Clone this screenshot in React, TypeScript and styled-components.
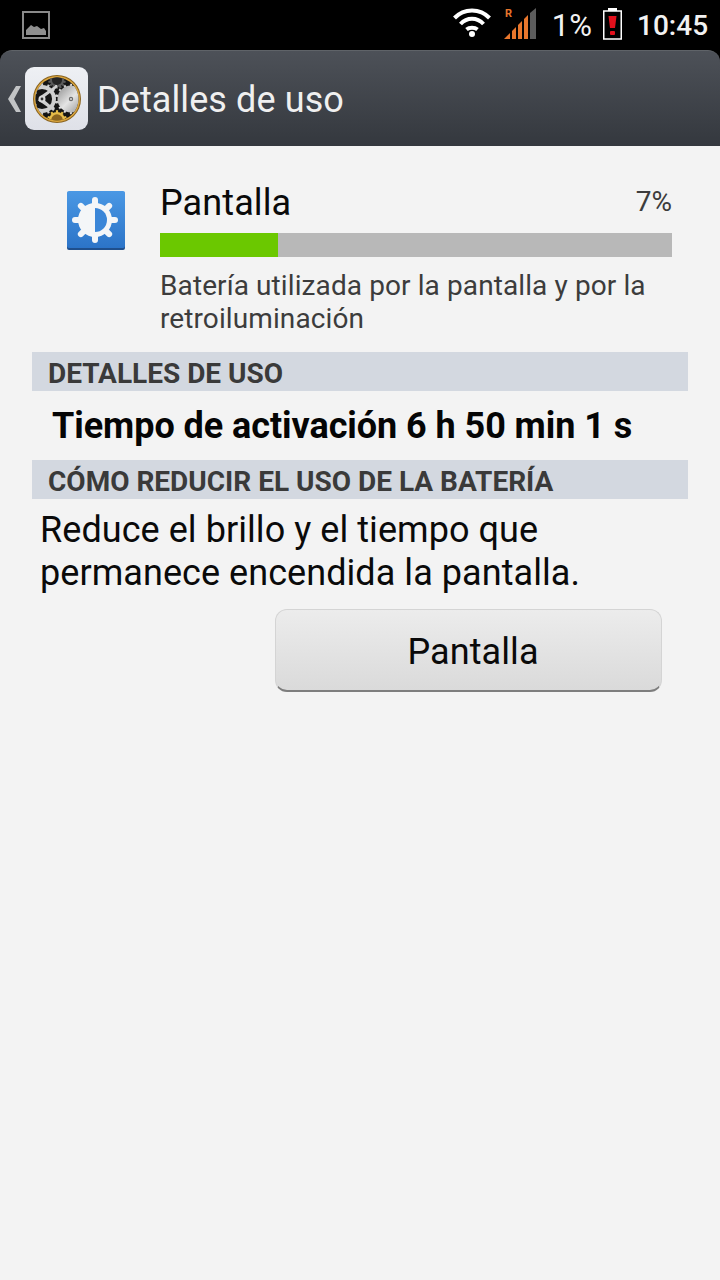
import React from "react";
import styled, { createGlobalStyle } from "styled-components";

const Global = createGlobalStyle`
  html, body { margin: 0; padding: 0; background: #f3f3f3; }
  body { font-family: Roboto, "Liberation Sans", sans-serif; }
`;

const Screen = styled.div`
  width: 720px;
  height: 1280px;
  background: #f3f3f3;
  overflow: hidden;
  display: flex;
  flex-direction: column;
`;

const StatusBar = styled.div`
  height: 50px;
  background: #000;
  display: flex;
  align-items: center;
  padding: 0 12px 0 22px;
  color: #f2f2f2;
`;

const StatusRight = styled.div`
  margin-left: auto;
  display: flex;
  align-items: center;
`;

const Percent = styled.span`
  font-size: 31px;
  margin-left: 16px;
`;

const Clock = styled.span`
  font-size: 28px;
  font-weight: 500;
  margin-left: 15px;
  width: 71px;
`;

const ActionFrame = styled.div`
  background: #000;
`;

const ActionBar = styled.div`
  height: 96px;
  background: linear-gradient(#4d5158, #34383e);
  border-radius: 12px 12px 0 0;
  display: flex;
  align-items: center;
  padding-left: 7px;
  box-sizing: border-box;
  border-top: 1px solid #5f6368;
`;

const AppBadge = styled.div`
  width: 63px;
  height: 63px;
  border-radius: 9px;
  background: linear-gradient(#eef0f4, #dfe1e8);
  margin-left: 2px;
  display: flex;
  align-items: center;
  justify-content: center;
`;

const ActionTitle = styled.h1`
  margin: 2px 0 0 9px;
  font-size: 36px;
  font-weight: 400;
  color: #f0f0f0;
  letter-spacing: 0.1px;
`;

const Content = styled.div`
  display: flex;
  flex-direction: column;
  padding: 0 32px;
`;

const UsageRow = styled.div`
  display: flex;
  padding-top: 34px;
`;

const IconSlot = styled.div`
  width: 128px;
  padding: 11px 0 0 35px;
  box-sizing: border-box;
  flex-shrink: 0;
`;

const UsageBody = styled.div`
  flex: 1;
  padding-right: 16px;
`;

const NameRow = styled.div`
  display: flex;
  align-items: flex-start;
  justify-content: space-between;
  height: 53px;
`;

const Name = styled.span`
  font-size: 36px;
  color: #0a0a0a;
  line-height: 46px;
  letter-spacing: 0.1px;
`;

const Pct = styled.span`
  font-size: 28px;
  color: #3c3c3c;
  line-height: 44px;
`;

const Bar = styled.div`
  height: 24px;
  background: #b8b8b8;
`;

const BarFill = styled.div`
  height: 100%;
  background: #6bc800;
`;

const UsageDesc = styled.p`
  margin: 12px 0 0;
  font-size: 28px;
  line-height: 33px;
  color: #3c3c3c;
  letter-spacing: 0.1px;
`;

const SectionHeader = styled.div<{ $top: number }>`
  margin-top: ${(p) => p.$top}px;
  height: 39px;
  background: #d3d8e0;
  padding-left: 16px;
  font-size: 28px;
  font-weight: 700;
  line-height: 43px;
  color: #3a3a3a;
`;

const ActiveTime = styled.div`
  font-size: 36px;
  font-weight: 700;
  color: #050505;
  padding-left: 20px;
  height: 69px;
  line-height: 71px;
  letter-spacing: -0.06px;
`;

const Tip = styled.p`
  margin: 10px 0 0 8px;
  font-size: 36px;
  line-height: 43px;
  color: #0a0a0a;
  letter-spacing: 0.06px;
`;

const ButtonRow = styled.div`
  display: flex;
  padding: 14px 0 0 243px;
`;

const ActionButton = styled.button`
  width: 387px;
  height: 83px;
  border: 1px solid #d4d4d4;
  border-bottom: 2px solid #7d7d7d;
  border-radius: 12px;
  background: linear-gradient(#ececec, #dadada);
  font: 400 36px Roboto, "Liberation Sans", sans-serif;
  letter-spacing: 0.1px;
  color: #0a0a0a;
  padding: 4px 0 0 9px;
`;

function GalleryIcon() {
  return (
    <svg width="28" height="28" viewBox="0 0 28 28">
      <rect x="1" y="1" width="26" height="26" fill="none" stroke="#8a8a8a" strokeWidth="2" />
      <path d="M4 24v-5l5-5 3 2 3-1 4 3 3-1 2 3v4z" fill="#8f8f8f" />
    </svg>
  );
}

function WifiIcon() {
  return (
    <svg width="38" height="30" viewBox="0 0 38 30" fill="none" stroke="#fff" strokeWidth="4" style={{ marginBottom: 6 }}>
      <path d="M1.5 11C11 1 27 1 36.5 11" />
      <path d="M7.5 17C14 10 24 10 30.5 17" />
      <path d="M13.5 22.5C16.5 20 21.5 20 24.5 22.5" />
      <circle cx="19" cy="27" r="3" fill="#fff" stroke="none" />
    </svg>
  );
}

function SignalIcon() {
  return (
    <svg width="32" height="32" viewBox="0 0 32 32" style={{ marginLeft: 13, marginBottom: 3 }}>
      <text x="1" y="9" fontSize="11" fontWeight="700" fill="#e8762c" fontFamily="Roboto, sans-serif">R</text>
      <path d="M0 31l6-6v6z" fill="#e8762c" />
      <path d="M8 31v-8l4-4v12z" fill="#e8762c" />
      <path d="M14 31V17l4-4v18z" fill="#e8762c" />
      <path d="M20 31V11l4-4v24z" fill="#e8762c" />
      <path d="M26 31V5l6-5v31z" fill="#5c5c5c" />
    </svg>
  );
}

function BatteryIcon() {
  return (
    <svg width="19" height="32" viewBox="0 0 19 32" style={{ marginLeft: 11, marginBottom: 3 }}>
      <rect x="5" y="0" width="9" height="3" fill="#fff" />
      <rect x="0.75" y="3" width="17.5" height="28" fill="#000" stroke="#fff" strokeWidth="1.5" />
      <path d="M5.5 8h8l-1.5 12h-5z" fill="#e3101c" />
      <rect x="7" y="23" width="5" height="4" rx="1" fill="#e3101c" />
    </svg>
  );
}

function Gear({ cx, cy, r, face, hole, teeth = 14 }: { cx: number; cy: number; r: number; face: string; hole?: string; teeth?: number }) {
  const angles = Array.from({ length: teeth }, (_, i) => (i * 360) / teeth);
  return (
    <g fill={face}>
      {angles.map((a) => (
        <rect key={a} x={cx - 1.1} y={cy - r - 1.8} width="2.2" height="3.5" transform={`rotate(${a} ${cx} ${cy})`} />
      ))}
      <circle cx={cx} cy={cy} r={r} />
      {hole && <circle cx={cx} cy={cy} r={r * 0.72} fill={hole} />}
    </g>
  );
}

function ClockworkLogo() {
  return (
    <svg width="50" height="50" viewBox="0 0 50 50">
      <defs>
        <linearGradient id="steel" x1="0" y1="0" x2="1" y2="1">
          <stop offset="0" stopColor="#8e8e8e" />
          <stop offset="0.5" stopColor="#e4e4e4" />
          <stop offset="1" stopColor="#8a8a8a" />
        </linearGradient>
        <clipPath id="dial">
          <circle cx="25" cy="25" r="21.5" />
        </clipPath>
      </defs>
      <circle cx="25" cy="25" r="24" fill="#8a6420" />
      <circle cx="25" cy="25" r="23" fill="#dca63e" />
      <circle cx="25" cy="25" r="21.5" fill="#141414" />
      <g clipPath="url(#dial)">
        <Gear cx={25} cy={6} r={7} face="#5a5a5a" hole="#242424" />
        <Gear cx={39} cy={25} r={13.5} face="url(#steel)" />
        <Gear cx={10} cy={25} r={14} face="#cfcfcf" hole="#161616" />
        <path d="M8.5 23.5L25 12l-14.5 11zM8.5 26.5L22 36 10.5 26z" stroke="#cfcfcf" strokeWidth="2.5" />
        <path d="M4 20L-2 12M4 30l-6 6" stroke="#cfcfcf" strokeWidth="3" />
        <Gear cx={25} cy={46} r={8} face="#e6bc48" hole="#8a6420" teeth={10} />
      </g>
      <circle cx="10" cy="25" r="3.5" fill="#d8d8d8" />
      <circle cx="10" cy="25" r="1.4" fill="#333" />
      <circle cx="39" cy="25" r="2.2" fill="#6a6a6a" />
      <circle cx="39" cy="25" r="1" fill="#ddd" />
    </svg>
  );
}

function ScreenIcon() {
  const spokes = [0, 45, 90, 135, 180, 225, 270, 315];
  return (
    <svg width="58" height="59" viewBox="0 0 58 59">
      <defs>
        <linearGradient id="blue" x1="0" y1="0" x2="0" y2="1">
          <stop offset="0" stopColor="#4a98e4" />
          <stop offset="1" stopColor="#2c74c8" />
        </linearGradient>
      </defs>
      <rect x="0" y="1" width="58" height="58" rx="2" fill="#1f4f8c" />
      <rect x="0" y="0" width="58" height="57" rx="2" fill="url(#blue)" />
      <g stroke="#f4f6f8" strokeWidth="6" strokeLinecap="round">
        {spokes.map((a) => (
          <line key={a} x1="28" y1="9" x2="28" y2="16" transform={`rotate(${a} 28 29)`} />
        ))}
      </g>
      <circle cx="28" cy="29" r="17" fill="#f4f6f8" />
      <path d="M28 17a12 12 0 0 1 0 24z" fill="#3a86d8" />
    </svg>
  );
}

export default function App() {
  return (
    <Screen>
      <Global />
      <StatusBar>
        <GalleryIcon />
        <StatusRight>
          <WifiIcon />
          <SignalIcon />
          <Percent>1%</Percent>
          <BatteryIcon />
          <Clock>10:45</Clock>
        </StatusRight>
      </StatusBar>
      <ActionFrame>
        <ActionBar>
          <svg width="16" height="28" viewBox="0 0 16 28">
            <path d="M14 1L7 14l7 13H9L1 14 9 1z" fill="#c2c4c6" />
          </svg>
          <AppBadge>
            <ClockworkLogo />
          </AppBadge>
          <ActionTitle>Detalles de uso</ActionTitle>
        </ActionBar>
      </ActionFrame>
      <Content>
        <UsageRow>
          <IconSlot>
            <ScreenIcon />
          </IconSlot>
          <UsageBody>
            <NameRow>
              <Name>Pantalla</Name>
              <Pct>7%</Pct>
            </NameRow>
            <Bar>
              <BarFill style={{ width: "23%" }} />
            </Bar>
            <UsageDesc>
              Batería utilizada por la pantalla y por la retroiluminación
            </UsageDesc>
          </UsageBody>
        </UsageRow>
        <SectionHeader $top={17}>DETALLES DE USO</SectionHeader>
        <ActiveTime>Tiempo de activación 6 h 50 min 1 s</ActiveTime>
        <SectionHeader $top={0}>CÓMO REDUCIR EL USO DE LA BATERÍA</SectionHeader>
        <Tip>
          Reduce el brillo y el tiempo que
          <br />
          permanece encendida la pantalla.
        </Tip>
        <ButtonRow>
          <ActionButton>Pantalla</ActionButton>
        </ButtonRow>
      </Content>
    </Screen>
  );
}
